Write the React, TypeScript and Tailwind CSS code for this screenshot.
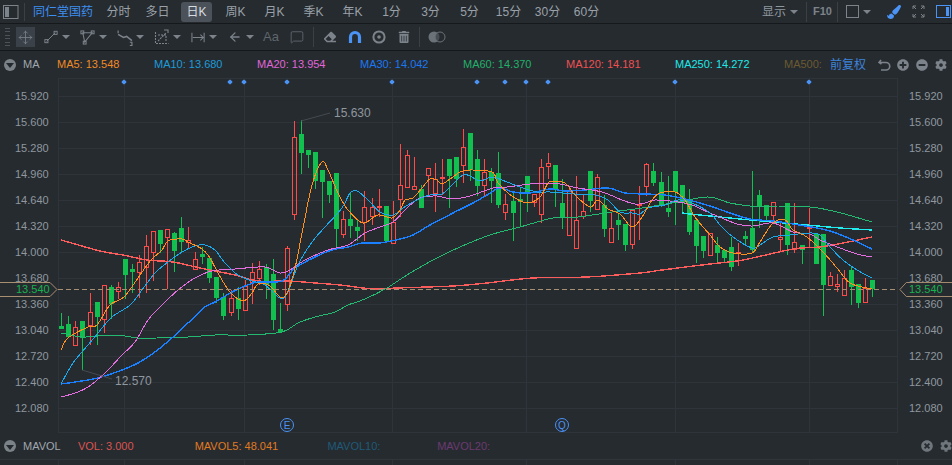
import { ArrowLeft, MessageSquare, Move } from "lucide-react";
import { FaCog, FaEraser, FaMinusCircle, FaPaintBrush, FaPlusCircle, FaTimesCircle, FaTrashAlt } from "react-icons/fa";

const font = { fontFamily: '"Liberation Sans", "Noto Sans CJK SC", sans-serif' };

const periods = ["分时", "多日", "日K", "周K", "月K", "季K", "年K", "1分", "3分", "5分", "15分", "30分", "60分"];
const prices = ["15.920", "15.600", "15.280", "14.960", "14.640", "14.320", "14.000", "13.680", "13.360", "13.040", "12.720", "12.400", "12.080"];

const legend = [
    { label: "MA5: 13.548", cls: "w-[97px] text-[#f08a24]" },
    { label: "MA10: 13.680", cls: "w-[103px] text-[#1c9bd8]" },
    { label: "MA20: 13.954", cls: "w-[103px] text-[#e066d8]" },
    { label: "MA30: 14.042", cls: "w-[103px] text-[#1a78f0]" },
    { label: "MA60: 14.370", cls: "w-[103px] text-[#22b06a]" },
    { label: "MA120: 14.181", cls: "w-[109px] text-[#f05050]" },
    { label: "MA250: 14.272", cls: "w-[109px] text-[#1fe8e8]" },
    { label: "MA500:", cls: "w-[46px] text-[#6b5a30]" },
];

// kind (0 red, 1 green), high, body top, body bottom, low: all in page pixels
const candles: number[][] = [
    [1, 313, 326, 329, 329], [1, 316, 324, 337, 337], [0, 321, 327, 345, 346], [1, 321, 321, 338, 370], [0, 293, 312, 325, 345], [1, 302, 302, 317, 345],
    [0, 285, 285, 319, 333], [1, 285, 287, 304, 319], [0, 282, 287, 291, 299], [1, 259, 259, 275, 299], [1, 264, 269, 272, 293], [0, 255, 262, 272, 298],
    [0, 235, 246, 267, 293], [0, 231, 231, 252, 281], [1, 230, 230, 244, 253], [0, 229, 229, 237, 289], [1, 232, 233, 251, 272], [1, 217, 228, 242, 252],
    [0, 227, 240, 242, 249], [0, 252, 259, 269, 270], [1, 247, 254, 257, 264], [1, 258, 258, 278, 283], [1, 277, 277, 298, 303], [1, 293, 297, 316, 320],
    [0, 290, 298, 312, 316], [1, 287, 298, 309, 320], [0, 280, 286, 310, 310], [0, 263, 272, 282, 304], [0, 261, 269, 278, 285], [1, 264, 267, 285, 299],
    [1, 259, 274, 320, 330], [1, 303, 329, 332, 332], [0, 246, 248, 304, 311], [0, 121, 137, 214, 220], [1, 120, 134, 153, 174], [1, 150, 150, 155, 168],
    [1, 152, 152, 181, 189], [1, 170, 170, 182, 218], [1, 181, 181, 195, 203], [1, 173, 173, 229, 247], [0, 211, 219, 234, 238], [1, 192, 219, 226, 238],
    [1, 220, 227, 231, 241], [0, 191, 207, 222, 241], [0, 198, 207, 216, 225], [0, 189, 206, 207, 217], [1, 206, 206, 241, 241], [0, 201, 222, 243, 243],
    [0, 144, 185, 199, 217], [0, 150, 155, 187, 187], [0, 157, 186, 189, 190], [1, 185, 189, 208, 208], [0, 168, 168, 175, 196], [0, 163, 179, 193, 212],
    [0, 159, 177, 178, 195], [1, 159, 159, 176, 208], [1, 157, 157, 179, 187], [0, 129, 147, 165, 183], [1, 133, 133, 170, 181], [1, 150, 159, 186, 196],
    [0, 159, 172, 185, 196], [1, 168, 172, 181, 203], [1, 152, 173, 205, 208], [0, 194, 204, 212, 220], [1, 191, 201, 213, 241], [1, 188, 199, 202, 227],
    [1, 176, 176, 194, 212], [0, 194, 194, 202, 207], [0, 159, 167, 214, 223], [0, 153, 163, 166, 179], [1, 165, 165, 189, 207], [1, 179, 203, 217, 229],
    [0, 187, 190, 235, 235], [0, 176, 220, 248, 248], [0, 195, 211, 216, 219], [1, 171, 171, 201, 212], [0, 174, 177, 209, 209], [1, 195, 205, 229, 237],
    [0, 213, 228, 242, 242], [1, 213, 220, 225, 240], [1, 224, 224, 245, 251], [0, 210, 210, 244, 249], [0, 186, 204, 205, 240], [0, 163, 164, 186, 196],
    [1, 163, 171, 183, 186], [1, 172, 182, 205, 207], [1, 176, 208, 212, 217], [1, 171, 171, 192, 225], [1, 185, 185, 203, 213], [1, 189, 200, 232, 235],
    [1, 220, 220, 246, 263], [1, 238, 236, 251, 258], [0, 233, 233, 255, 255], [1, 237, 245, 253, 263], [1, 250, 250, 258, 263], [1, 237, 247, 267, 271],
    [0, 243, 252, 253, 266], [1, 231, 236, 239, 244], [1, 171, 228, 250, 253], [1, 190, 195, 207, 228], [1, 205, 205, 216, 221], [0, 202, 202, 215, 223],
    [0, 223, 237, 239, 252], [1, 203, 203, 245, 255], [0, 203, 242, 249, 253], [1, 245, 245, 250, 264], [0, 208, 227, 228, 248], [1, 233, 234, 264, 264],
    [1, 234, 234, 285, 316], [0, 272, 276, 285, 285], [0, 274, 284, 286, 292], [0, 270, 278, 295, 295], [1, 267, 270, 287, 305], [1, 284, 284, 303, 308],
    [0, 278, 288, 302, 302], [1, 280, 280, 289, 297],
];

const ma5 = [61, 350, 68, 338, 88, 327, 97, 325, 110, 305, 124, 297, 138, 278, 147, 265, 153, 258, 162, 250, 168, 241, 182, 239, 188, 242, 202, 249, 210, 258, 218, 273, 230, 292, 243, 301, 252, 293, 258, 284, 270, 286, 280, 297, 287, 293, 295, 268, 303, 228, 312, 185, 322, 162, 328, 170, 338, 193, 348, 210, 363, 223, 378, 215, 392, 218, 400, 210, 405, 200, 413, 198, 422, 188, 430, 179, 437, 180, 442, 184, 450, 179, 460, 172, 470, 170, 492, 172, 498, 183, 512, 196, 527, 203, 540, 197, 548, 183, 553, 182, 565, 183, 575, 195, 590, 207, 598, 200, 608, 209, 620, 214, 632, 227, 642, 217, 652, 200, 660, 193, 675, 192, 685, 200, 695, 217, 710, 235, 720, 247, 733, 253, 752, 253, 760, 242, 773, 223, 785, 220, 793, 230, 807, 237, 823, 252, 837, 268, 850, 283, 867, 288, 872, 289];
const ma10 = [61, 384, 73, 363, 88, 345, 98, 333, 112, 317, 130, 305, 142, 290, 155, 273, 168, 262, 182, 252, 195, 246, 205, 245, 215, 250, 225, 263, 238, 275, 252, 281, 265, 285, 280, 298, 288, 292, 298, 265, 312, 242, 325, 227, 342, 208, 350, 193, 357, 191, 368, 200, 380, 212, 393, 215, 403, 208, 417, 200, 430, 195, 442, 194, 452, 185, 463, 175, 470, 176, 480, 181, 492, 177, 507, 182, 520, 187, 537, 192, 550, 192, 575, 194, 595, 195, 608, 200, 620, 212, 632, 213, 640, 214, 648, 208, 665, 205, 678, 200, 692, 203, 710, 213, 720, 225, 733, 237, 752, 248, 760, 245, 773, 237, 790, 235, 810, 233, 820, 235, 830, 247, 843, 260, 857, 270, 872, 278];
const ma20 = [61, 397, 75, 393, 88, 387, 105, 373, 122, 355, 135, 342, 148, 320, 162, 305, 178, 290, 195, 278, 212, 271, 235, 269, 265, 267, 280, 273, 290, 270, 305, 260, 328, 250, 348, 245, 365, 233, 380, 227, 393, 222, 407, 208, 420, 198, 437, 196, 452, 199, 470, 196, 493, 188, 507, 187, 530, 184, 550, 183, 560, 184, 578, 188, 602, 192, 622, 200, 635, 204, 645, 203, 655, 200, 678, 202, 692, 205, 710, 213, 737, 224, 753, 226, 773, 223, 793, 232, 810, 234, 820, 240, 840, 248, 857, 254, 872, 257];
const ma30 = [61, 384, 75, 382, 98, 378, 122, 370, 138, 363, 155, 352, 172, 338, 188, 323, 205, 307, 215, 302, 232, 292, 245, 286, 258, 282, 282, 281, 295, 268, 315, 257, 332, 250, 348, 247, 362, 243, 380, 243, 400, 239, 413, 235, 430, 225, 453, 213, 473, 203, 487, 195, 500, 188, 513, 192, 530, 193, 550, 189, 565, 191, 585, 190, 608, 188, 625, 193, 645, 194, 665, 195, 685, 199, 710, 206, 730, 213, 750, 219, 773, 221, 793, 224, 817, 228, 833, 232, 853, 240, 872, 249];
const ma60 = [61, 333, 82, 337, 98, 336, 125, 336, 137, 338, 157, 338, 188, 337, 215, 335, 248, 335, 282, 332, 298, 323, 315, 317, 335, 312, 348, 305, 365, 299, 387, 288, 407, 275, 433, 260, 460, 247, 490, 235, 520, 227, 553, 218, 578, 217, 612, 212, 642, 208, 678, 202, 708, 197, 730, 203, 750, 206, 777, 207, 810, 207, 837, 212, 872, 222];
const ma120 = [61, 240, 100, 251, 123, 255, 147, 260, 173, 262, 200, 268, 215, 271, 235, 275, 258, 281, 288, 281, 315, 283, 340, 285, 373, 289, 397, 288, 453, 286, 487, 283, 533, 278, 587, 277, 640, 273, 662, 270, 710, 264, 743, 260, 793, 249, 820, 247, 843, 243, 872, 237];
const ma250 = [682, 213, 690, 214, 710, 216, 740, 219, 773, 222, 807, 225, 840, 228, 872, 230];

const markers = [124, 230, 244, 287, 392, 477, 505, 526, 548, 675, 809];
const gridY = [96, 122, 148, 174, 200, 226, 252, 278, 304, 330, 356, 382, 408];
const gridX = [124, 244, 392, 526, 675, 809];

// smooth path through the sampled points
function curve(p: number[]) {
    let d = `M${p[0]} ${p[1]}`;
    for (let i = 0; i < p.length - 2; i += 2) {
        const x0 = p[Math.max(i - 2, 0)], y0 = p[Math.max(i - 1, 1)];
        const x1 = p[i], y1 = p[i + 1], x2 = p[i + 2], y2 = p[i + 3];
        const x3 = p[Math.min(i + 4, p.length - 2)], y3 = p[Math.min(i + 5, p.length - 1)];
        d += `C${x1 + (x2 - x0) / 6} ${y1 + (y2 - y0) / 6} ${x2 - (x3 - x1) / 6} ${y2 - (y3 - y1) / 6} ${x2} ${y2}`;
    }
    return d;
}

function Caret({ className = "" }: { className?: string }) {
    return <span className={`h-0 w-0 shrink-0 border-x-[4px] border-t-[4px] border-x-transparent border-t-[#7c838a] ${className}`} />;
}

function RoundCaret() {
    return (
        <span className="flex size-[12px] shrink-0 items-center justify-center rounded-full bg-[#7b8288]">
            <span className="mt-[2px] h-0 w-0 border-x-[4px] border-t-[5px] border-x-transparent border-t-[#24292e]" />
        </span>
    );
}

function Stroke({ className, children }: { className: string; children: React.ReactNode }) {
    return (
        <svg className={`shrink-0 ${className}`} viewBox="0 0 16 16" fill="none" stroke="#7c838a" strokeWidth="1.1">
            {children}
        </svg>
    );
}

function TopBar() {
    return (
        <div className="flex h-[24px] items-center border-b border-[#16191c] text-[12px] text-[#9aa1a8]">
            <svg className="ml-[3px] size-[16px] shrink-0" viewBox="0 0 16 16" fill="none">
                <rect x="0.5" y="1.5" width="14.5" height="13" stroke="#7c838a" />
                <rect x="2" y="3" width="4" height="10" fill="#7c838a" />
            </svg>
            <span className="ml-[5px] h-[18px] w-px bg-[#3a4046]" />
            <span className="ml-[8px] w-[66px] shrink-0 whitespace-nowrap text-[#3d8ff0]">同仁堂国药</span>
            {periods.map((p) => (
                <span key={p} className="flex h-[20px] w-[39px] shrink-0 items-center justify-center whitespace-nowrap">
                    <span className={p === "日K" ? "flex h-[20px] w-[31px] items-center justify-center rounded-[3px] bg-[#4b525a] text-[#d8dce0]" : ""}>{p}</span>
                </span>
            ))}
            <span className="ml-[156px] shrink-0 whitespace-nowrap text-[#8f979f]">显示</span>
            <Caret className="ml-[4px]" />
            <span className="ml-[8px] h-[20px] w-px shrink-0 bg-[#3a4046]" />
            <span className="ml-[6px] w-[19px] shrink-0 whitespace-nowrap text-[11px] font-bold text-[#7c838a]">F10</span>
            <span className="ml-[5px] h-[20px] w-px shrink-0 bg-[#3a4046]" />
            <span className="ml-[8px] size-[13px] shrink-0 border border-[#7c838a]" />
            <Caret className="ml-[4px]" />
            <FaPaintBrush className="ml-[16px] size-[14px] shrink-0 text-[#4b93f5]" />
            <svg className="ml-[11px] size-[13px] shrink-0" viewBox="0 0 13 13" fill="none" stroke="#7c838a" strokeWidth="1">
                <path d="M1 4V1h3M1 1l3 3M9 1h3v3M12 1L9 4M1 9v3h3M1 12l3-3M12 9v3H9M12 12L9 9" />
            </svg>
            <svg className="ml-[11px] size-[15px] shrink-0" viewBox="0 0 15 15" fill="none">
                <rect x="0.5" y="1.5" width="14" height="12" stroke="#4b93f5" />
                <rect x="10" y="3" width="3" height="9" fill="#4b93f5" />
            </svg>
        </div>
    );
}

function ToolBar() {
    return (
        <div className="flex h-[27px] items-center border-b border-[#16191c] text-[#7c838a]">
            <span className="ml-[5px] flex h-[18px] w-[5px] shrink-0 flex-col justify-between">
                {[0, 1, 2, 3, 4, 5].map((i) => <span key={i} className="h-px bg-[#4b525a]" />)}
            </span>
            <span className="ml-[6px] flex h-[20px] w-[19px] shrink-0 items-center justify-center bg-[#3a4148]">
                <Move size={15} strokeWidth={1.3} />
            </span>
            <Stroke className="ml-[9px] size-[14px]">
                <path d="M3 13L13 3" /><rect x="1" y="11" width="3.5" height="3.5" /><rect x="11.5" y="1.5" width="3.5" height="3.5" />
            </Stroke>
            <Caret className="ml-[4px]" />
            <Stroke className="ml-[10px] size-[15px]">
                <path d="M3 3H13L5 13Z" /><rect x="1" y="1" width="3" height="3" /><rect x="12" y="1" width="3" height="3" /><rect x="3.5" y="12" width="3" height="3" />
            </Stroke>
            <Caret className="ml-[4px]" />
            <Stroke className="ml-[9px] size-[17px]">
                <path d="M2 5L7 8L10 7L15 11" strokeWidth="1.4" /><path d="M2 1.5V4M13 12.5h2v3h-2" />
            </Stroke>
            <Caret className="ml-[3px]" />
            <Stroke className="ml-[10px] size-[16px]">
                <path d="M1.5 3V14.5H14.5M4 12L12 4M4 6h8v6" strokeDasharray="2 1" />
                <path d="M10 1l4 0v3" />
            </Stroke>
            <Caret className="ml-[3px]" />
            <Stroke className="ml-[10px] size-[15px]">
                <path d="M1 3V13M14 3V13M2 8H13M10 5L13 8L10 11" />
            </Stroke>
            <Caret className="ml-[3px]" />
            <ArrowLeft size={14} strokeWidth={2.2} className="ml-[11px] shrink-0" />
            <Caret className="ml-[4px]" />
            <span className="ml-[9px] w-[16px] shrink-0 text-[13px] text-[#5f666c]">Aa</span>
            <MessageSquare size={14} strokeWidth={1.3} className="ml-[11px] shrink-0 text-[#6b7278]" />
            <span className="ml-[9px] h-[20px] w-px shrink-0 bg-[#3a4046]" />
            <FaEraser className="ml-[10px] size-[12px] shrink-0" />
            <svg className="ml-[12px] size-[14px] shrink-0" viewBox="0 0 14 14" fill="none" stroke="#4b93f5" strokeWidth="3.2">
                <path d="M2.5 13V7a4.5 4.5 0 0 1 9 0v6" />
            </svg>
            <svg className="ml-[10px] size-[14px] shrink-0" viewBox="0 0 14 14" fill="none" stroke="#7c838a">
                <circle cx="7" cy="7" r="5.6" strokeWidth="2" /><circle cx="7" cy="7" r="1.8" fill="#7c838a" stroke="none" />
            </svg>
            <FaTrashAlt className="ml-[12px] size-[12px] shrink-0" />
            <span className="ml-[9px] h-[20px] w-px shrink-0 bg-[#3a4046]" />
            <svg className="ml-[8px] h-[12px] w-[18px] shrink-0" viewBox="0 0 18 12" fill="none">
                <circle cx="6" cy="6" r="5.5" fill="#6b7278" /><circle cx="12" cy="6" r="5" stroke="#6b7278" fill="#262b30" fillOpacity="0.5" />
            </svg>
        </div>
    );
}

function LegendRow() {
    return (
        <div className="flex h-[27px] items-center text-[11px]">
            <span className="ml-[4px]"><RoundCaret /></span>
            <span className="ml-[7px] w-[34px] text-[#a0a7ae]">MA</span>
            {legend.map((l) => <span key={l.label} className={`shrink-0 whitespace-nowrap ${l.cls}`}>{l.label}</span>)}
            <span className="w-[48px] text-[12px] text-[#3d84dc]">前复权</span>
            <svg className="size-[13px] shrink-0" viewBox="0 0 13 13" fill="none" stroke="#7c838a" strokeWidth="1.6">
                <path d="M3 2L1 4.5L3.5 6M1.5 4.5H8a3.6 3.6 0 0 1 0 7.5H3" />
            </svg>
            <FaPlusCircle className="ml-[6px] size-[12px] shrink-0 text-[#7c838a]" />
            <FaMinusCircle className="ml-[7px] size-[12px] shrink-0 text-[#7c838a]" />
            <FaCog className="ml-[7px] size-[12px] shrink-0 text-[#7c838a]" />
        </div>
    );
}

function Axis({ className }: { className: string }) {
    return (
        <div className={`flex shrink-0 flex-col pt-[5px] text-[11px] text-[#8f979f] ${className}`}>
            {prices.map((p) => <span key={p} className="flex h-[26px] shrink-0 items-center">{p}</span>)}
        </div>
    );
}

function Chart() {
    return (
        <svg className="w-[840px] shrink-0" height="355" viewBox="58 78 840 355" fill="none">
            <g stroke="#2f343a" shapeRendering="crispEdges">
                <rect x="58.5" y="78.5" width="839" height="354" />
                {gridY.map((y) => <path key={y} d={`M58 ${y + 0.5}H898`} />)}
                {gridX.map((x) => <path key={x} d={`M${x + 0.5} 78V433`} />)}
            </g>
            <g shapeRendering="crispEdges">
                {candles.map(([kind, high, top, bottom, low], i) => {
                    const x = Math.round(61.3 + 7.05 * i);
                    const c = kind ? "#12c04f" : "#ff4a4a";
                    return kind ? (
                        <g key={i}>
                            <path d={`M${x + 0.5} ${high}V${low}`} stroke={c} />
                            <rect x={x - 2} y={top} width="5" height={Math.max(bottom - top, 2)} fill={c} />
                        </g>
                    ) : (
                        <g key={i}>
                            <path d={`M${x + 0.5} ${high}V${top}M${x + 0.5} ${bottom}V${low}`} stroke={c} />
                            <rect x={x - 2 + 0.5} y={top + 0.5} width="4" height={Math.max(bottom - top, 1)} stroke={c} />
                        </g>
                    );
                })}
            </g>
            <g shapeRendering="crispEdges">
                <path d={curve(ma120)} stroke="#fb5c5c" strokeWidth="1.4" />
                <path d={curve(ma60)} stroke="#25b870" />
                <path d={curve(ma250)} stroke="#22eef0" strokeWidth="1.4" />
                <path d={curve(ma30)} stroke="#1a80ff" strokeWidth="1.4" />
                <path d={curve(ma20)} stroke="#e56fe0" />
                <path d={curve(ma10)} stroke="#1ca8ea" />
                <path d={curve(ma5)} stroke="#ff8f1f" />
            </g>
            <path d="M58 289.5H898" stroke="#a98f72" strokeDasharray="5 3" />
            <path d="M301 121L330 113M82 370L112 379" stroke="#454a50" />
            {markers.map((x) => <rect key={x} x={x - 2} y="80" width="4" height="4" rx="1" transform={`rotate(45 ${x} 82)`} fill="#4b93f5" />)}
        </svg>
    );
}

function EventMark({ letter, className }: { letter: string; className: string }) {
    return (
        <span className={`absolute top-[340px] flex size-[14px] items-center justify-center rounded-full border border-[#4b93f5] text-[10px] text-[#4b93f5] ${className}`}>
            {letter}
        </span>
    );
}

function PriceTag({ side }: { side: "left" | "right" }) {
    const left = side === "left";
    return (
        <div className={`absolute top-[204px] h-[15px] ${left ? "left-0 w-[58px]" : "right-0 w-[53px]"}`}>
            <svg className="size-full" viewBox="0 0 58 15" preserveAspectRatio="none" fill="#262b30" stroke="#a98f72">
                <path d={left ? "M-2 .5H50L57 7.5L50 14.5H-2Z" : "M60 .5H8L1 7.5L8 14.5H60Z"} />
            </svg>
            <span className={`absolute top-0 text-[11px] leading-[15px] text-[#17b24f] ${left ? "left-[16px]" : "left-[10px]"}`}>13.540</span>
        </div>
    );
}

export default function App() {
    return (
        <div className="h-[465px] w-[952px] overflow-hidden bg-[#262b30]" style={font}>
            <TopBar />
            <ToolBar />
            <LegendRow />
            <div className="relative flex h-[355px]">
                <Axis className="w-[58px] pl-[15px]" />
                <Chart />
                <Axis className="flex-1 pl-[11px]" />
                <PriceTag side="left" />
                <PriceTag side="right" />
                <EventMark letter="E" className="left-[280px]" />
                <EventMark letter="Q" className="left-[555px]" />
                <span className="absolute top-[26px] left-[334px] text-[12px] text-[#8f979f]">15.630</span>
                <span className="absolute top-[294px] left-[115px] text-[12px] text-[#8f979f]">12.570</span>
            </div>
            <div className="flex h-[27px] items-center border-b border-[#30353b] text-[11px]">
                <span className="ml-[4px]"><RoundCaret /></span>
                <span className="ml-[7px] w-[55px] text-[#a0a7ae]">MAVOL</span>
                <span className="w-[117px] text-[#d9544f]">VOL: 3.000</span>
                <span className="w-[133px] text-[#e07a20]">MAVOL5: 48.041</span>
                <span className="w-[110px] text-[#1f5a78]">MAVOL10:</span>
                <span className="w-[100px] text-[#6b3a70]">MAVOL20:</span>
                <FaTimesCircle className="ml-[384px] size-[12px] shrink-0 text-[#6f767c]" />
                <FaCog className="ml-[7px] size-[12px] shrink-0 text-[#6f767c]" />
            </div>
            <svg className="ml-[58px] block w-[840px]" height="5" viewBox="58 0 840 5" stroke="#2f343a" shapeRendering="crispEdges">
                {gridX.concat(58, 897).map((x) => <path key={x} d={`M${x + 0.5} 0V5`} />)}
            </svg>
        </div>
    );
}
